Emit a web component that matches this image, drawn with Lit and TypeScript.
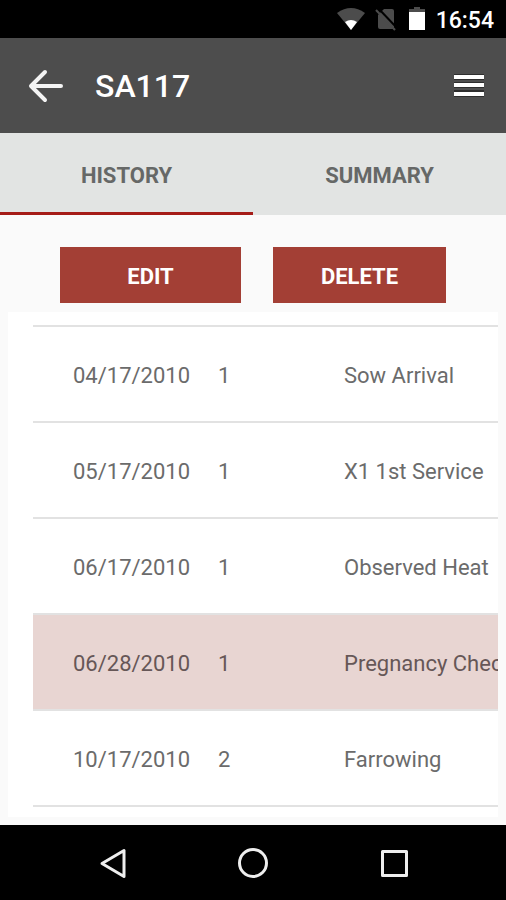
import { LitElement, html, css } from "lit";
import { customElement, state } from "lit/decorators.js";
import { classMap } from "lit/directives/class-map.js";

interface HistoryEvent {
  date: string;
  parity: number;
  name: string;
}

const EVENTS: HistoryEvent[] = [
  { date: "04/17/2010", parity: 1, name: "Sow Arrival" },
  { date: "05/17/2010", parity: 1, name: "X1 1st Service" },
  { date: "06/17/2010", parity: 1, name: "Observed Heat" },
  { date: "06/28/2010", parity: 1, name: "Pregnancy Check" },
  { date: "10/17/2010", parity: 2, name: "Farrowing" },
];

@customElement("status-bar")
class StatusBar extends LitElement {
  static styles = css`
    :host {
      display: flex;
      align-items: center;
      justify-content: flex-end;
      height: 38px;
      padding-right: 12px;
      background: #000;
      color: #fff;
      font-size: 23px;
      font-weight: 500;
      line-height: 28px;
    }
    svg {
      display: block;
    }
    .wifi {
      margin-right: 10px;
    }
    .sim {
      margin-right: 12px;
    }
    .battery {
      margin-right: 11px;
    }
    .time {
      padding-top: 4px;
    }
  `;

  render() {
    return html`
      <svg class="wifi" width="28" height="24" viewBox="0 0 28 24" aria-hidden="true">
        <path d="M0 6Q14 -4 28 6L14 23Z" fill="#4c4c4c" />
        <path d="M8 15Q14 11 20 15L14 23Z" fill="#fff" />
      </svg>
      <svg class="sim" width="22" height="24" viewBox="0 0 22 24" aria-hidden="true">
        <path d="M9 2H17Q19 2 19 4V20Q19 22 17 22H5Q3 22 3 20V8Z" fill="#4c4c4c" />
        <path d="M3 1L22 21" stroke="#000" stroke-width="2" />
        <path d="M1 3L20 23" stroke="#4c4c4c" stroke-width="2" />
      </svg>
      <svg class="battery" width="16" height="24" viewBox="0 0 16 24" aria-hidden="true">
        <path d="M5 0H11V2H16V5H0V2H5Z" fill="#4c4c4c" />
        <path d="M0 5H16V23H0Z" fill="#fff" />
      </svg>
      <span class="time">16:54</span>
    `;
  }
}

@customElement("nav-bar")
class NavBar extends LitElement {
  static styles = css`
    :host {
      display: flex;
      align-items: center;
      justify-content: center;
      gap: 109px;
      height: 75px;
      background: #000;
    }
    button {
      display: block;
      padding: 0;
      border: 0;
      background: none;
    }
    svg {
      display: block;
      fill: none;
      stroke: #eee;
      stroke-width: 3;
      stroke-linejoin: round;
    }
  `;

  render() {
    return html`
      <button aria-label="Back">
        <svg width="32" height="32" viewBox="0 0 32 32"><path d="M6 16.500L28 3.500V29.500Z" /></svg>
      </button>
      <button aria-label="Home">
        <svg width="32" height="32" viewBox="0 0 32 32"><circle cx="16" cy="16" r="13.500" /></svg>
      </button>
      <button aria-label="Recent apps">
        <svg width="32" height="32" viewBox="0 0 32 32"><rect x="4.500" y="4.500" width="24" height="24" /></svg>
      </button>
    `;
  }
}

@customElement("app-root")
class AppRoot extends LitElement {
  static styles = css`
    :host {
      display: flex;
      flex-direction: column;
      min-height: 100vh;
      background: #fafafa;
      font-family: Roboto, "Liberation Sans", sans-serif;
      color: #6b6b6b;
    }
    button {
      margin: 0;
      padding: 0;
      border: 0;
      background: none;
      color: inherit;
      font: inherit;
    }
    svg {
      display: block;
    }
    .header {
      display: flex;
      align-items: center;
      box-sizing: border-box;
      height: 95px;
      padding: 0 21px 0 28px;
      background: #4d4d4d;
      color: #fff;
    }
    .title {
      flex: 1;
      margin: 0 0 0 32px;
      font-size: 32px;
      font-weight: 500;
      line-height: 40px;
    }
    .tabs {
      display: grid;
      grid-template-columns: 1fr 1fr;
      height: 82px;
      background: #e2e4e3;
    }
    .tab {
      padding-top: 5px;
      border-bottom: 3px solid transparent;
      color: #666867;
      font-size: 22px;
      font-weight: 700;
    }
    .tab.active {
      border-bottom-color: #a51c18;
    }
    .content {
      flex: 1;
      padding: 32px 8px 8px;
    }
    .actions {
      display: grid;
      grid-template-columns: 181fr 173fr;
      gap: 32px;
      margin: 0 52px 9px;
    }
    .action {
      height: 56px;
      padding-top: 2px;
      background: #a33f35;
      color: #fff;
      font-size: 22px;
      font-weight: 700;
    }
    .panel {
      overflow: hidden;
      padding: 13px 0 10px 25px;
      background: #fff;
    }
    .events {
      width: 100%;
      border-collapse: collapse;
      table-layout: fixed;
      font-size: 22px;
      line-height: 28px;
      white-space: nowrap;
    }
    .row {
      height: 96px;
      border-top: 2px solid #e2e2e2;
      border-bottom: 2px solid #e2e2e2;
    }
    .row.selected {
      background: #e8d5d2;
      color: #665757;
    }
    .cell {
      padding: 4px 0 0;
    }
    .date {
      width: 145px;
      padding-left: 40px;
    }
    .parity {
      width: 126px;
    }
  `;

  @state() tab = "HISTORY";
  @state() selected = 3;

  render() {
    return html`
      <status-bar></status-bar>
      <header class="header">
        <button aria-label="Back">
          <svg width="35" height="34" viewBox="0 0 35 34" fill="none" stroke="#f4f4f4" stroke-width="4">
            <path d="M33 17H4M17 3L3 17L17 31" stroke-linecap="round" stroke-linejoin="round" />
          </svg>
        </button>
        <h1 class="title">SA117</h1>
        <button aria-label="Menu">
          <svg width="32" height="24" viewBox="0 0 32 24">
            <path d="M1 0H31V6H1ZM1 8H31V14H1ZM1 16H31V23H1Z" fill="#2e2e2e" />
            <path d="M1 1H31V5H1ZM1 9H31V13H1ZM1 18H31V22H1Z" fill="#fff" />
          </svg>
        </button>
      </header>
      <nav class="tabs">
        ${["HISTORY", "SUMMARY"].map(
          (name) => html`
            <button
              class=${classMap({ tab: true, active: this.tab === name })}
              @click=${() => (this.tab = name)}
            >${name}</button>
          `
        )}
      </nav>
      <main class="content">
        <div class="actions">
          <button class="action">EDIT</button>
          <button class="action">DELETE</button>
        </div>
        <div class="panel">
          <table class="events">
            <tbody>
              ${EVENTS.map(
                (event, i) => html`
                  <tr
                    class=${classMap({ row: true, selected: this.selected === i })}
                    @click=${() => (this.selected = i)}
                  >
                    <td class="cell date">${event.date}</td>
                    <td class="cell parity">${event.parity}</td>
                    <td class="cell">${event.name}</td>
                  </tr>
                `
              )}
            </tbody>
          </table>
        </div>
      </main>
      <nav-bar></nav-bar>
    `;
  }
}
